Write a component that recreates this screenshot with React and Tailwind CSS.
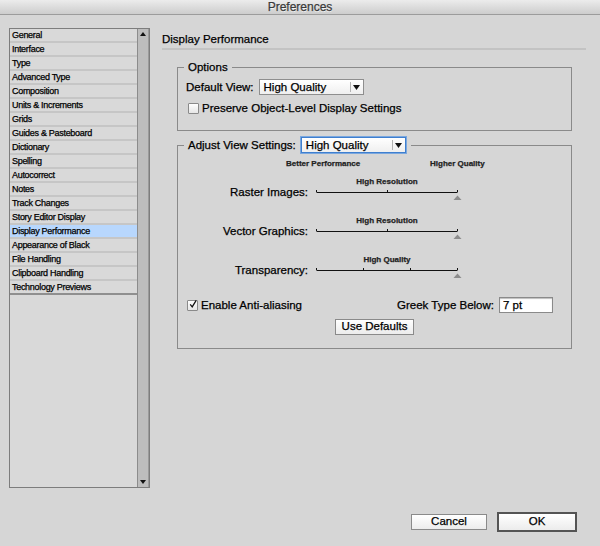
import React from 'react';

const ITEMS = [
    'General', 'Interface', 'Type', 'Advanced Type', 'Composition', 'Units & Increments',
    'Grids', 'Guides & Pasteboard', 'Dictionary', 'Spelling', 'Autocorrect', 'Notes',
    'Track Changes', 'Story Editor Display', 'Display Performance', 'Appearance of Black',
    'File Handling', 'Clipboard Handling', 'Technology Previews',
];

const Dropdown = ({ value, focused }) => (
    <div className={`flex h-[16px] w-[105px] items-stretch bg-gradient-to-b from-white to-[#efefef] ${focused ? 'border border-[#3f7fcf] shadow-[0_0_0_1px_#7aa7de]' : 'border border-[#8e8e8e]'}`}>
        <span className="flex-1 pl-[4px] text-[11.5px] leading-[14px] text-black">{value}</span>
        <span className="my-[2px] w-px bg-[#b4b4b4]"></span>
        <span className="flex w-[12px] items-center justify-center">
            <svg width="7" height="5" viewBox="0 0 7 5"><path d="M0 0h7L3.5 5z" fill="#111" /></svg>
        </span>
    </div>
);

const Checkbox = ({ checked }) => (
    <span className="flex h-[11px] w-[11px] items-center justify-center rounded-[1px] border border-[#8a8a8a] bg-gradient-to-b from-white to-[#e6e6e6]">
        {checked && (
            <svg width="10" height="10" viewBox="0 0 10 10" className="-mt-[2px] ml-[1px]">
                <path d="M1.5 5.5 L4 8.5 L9 0.5" stroke="#111" strokeWidth="1.6" fill="none" />
            </svg>
        )}
    </span>
);

const Slider = ({ caption, ticks }) => (
    <div className="w-[142px]">
        <div className="h-[10px] text-center text-[8px] font-bold leading-[10px] text-[#222]">{caption}</div>
        <svg width="150" height="14" className="overflow-visible">
            <line x1="0.5" y1="5.5" x2="141.5" y2="5.5" stroke="#111" strokeWidth="1.2" />
            {ticks.map(t => (
                <line key={t} x1={t + 0.5} y1="3" x2={t + 0.5} y2="5" stroke="#111" strokeWidth="1" />
            ))}
            <path d="M137.5 13 L141.5 8.5 L145.5 13 Z" fill="#8c8c8c" />
        </svg>
    </div>
);

const Button = ({ children, width, primary }) => (
    <button className={`flex items-center justify-center bg-gradient-to-b from-white to-[#ececec] text-[11.5px] text-black ${primary ? 'h-[20px] border-2 border-[#545454]' : 'h-[16px] border border-[#8a8a8a]'}`} style={{ width }}>
        {children}
    </button>
);

export default function App() {
    return (
        <div className="relative h-[546px] w-[600px] overflow-hidden bg-[#d6d6d6] font-['Liberation_Sans',Arial,sans-serif] text-black [-webkit-text-stroke:0.25px_currentColor]">
            {/* Title bar */}
            <div className="h-[15px] border-b border-[#9c9c9c] bg-gradient-to-b from-[#ececec] to-[#cdcdcd] text-center text-[12px] leading-[14px] text-[#3a3a3a] [text-shadow:0_1px_0_#f4f4f4]">
                Preferences
            </div>

            <div className="flex pt-[13px]">
                {/* Category list */}
                <div className="ml-[9px] flex h-[460px] w-[141px] border border-[#7d7d7d] bg-[#d9d9d9]">
                    <div className="flex-1">
                        {ITEMS.map((item, i) => (
                            <div
                                key={item}
                                className={`h-[14px] border-b-2 pl-[2px] text-[9px] leading-[12px] tracking-[-0.3px] text-black ${item === 'Display Performance' ? 'bg-[#b8d7fd]' : ''} ${i === ITEMS.length - 1 ? 'border-[#8f8f8f]' : 'border-[#c6c6c6]'}`}
                            >
                                {item}
                            </div>
                        ))}
                    </div>
                    <div className="flex w-[12px] flex-col items-center justify-between border-l border-r border-l-[#8c8c8c] border-r-[#9a9a9a] bg-[#bdbdbd] py-[3px]">
                        <svg width="6" height="4" viewBox="0 0 6 4"><path d="M3 0L6 4H0z" fill="#111" /></svg>
                        <svg width="6" height="4" viewBox="0 0 6 4"><path d="M0 0h6L3 4z" fill="#111" /></svg>
                    </div>
                </div>

                {/* Panel */}
                <div className="ml-[12px] w-[424px]">
                    <div className="border-b-2 border-[#c3c3c3] pb-[2px] pt-[4px] text-[11.5px] leading-[14px]">Display Performance</div>

                    <fieldset className="ml-[15px] mt-[10px] w-[395px] border border-[#8a8a8a] pb-[15px]">
                        <legend className="ml-[6px] px-[4px] text-[11.5px] leading-[14px]">Options</legend>
                        <div className="mt-[5px] flex items-center pl-[8px]">
                            <span className="mr-[5px] text-[11.5px] leading-[14px]">Default View:</span>
                            <Dropdown value="High Quality" />
                        </div>
                        <div className="mt-[6px] flex items-center gap-[3px] pl-[10px]">
                            <Checkbox />
                            <span className="text-[11.5px] leading-[14px]">Preserve Object-Level Display Settings</span>
                        </div>
                    </fieldset>

                    <fieldset className="ml-[15px] mt-[6px] w-[395px] border border-[#8a8a8a] pb-[13px]">
                        <legend className="ml-[6px] flex items-center px-[4px] pr-[5px]">
                            <span className="mr-[5px] text-[11.5px] leading-[14px]">Adjust View Settings:</span>
                            <Dropdown value="High Quality" focused />
                        </legend>

                        <div className="mt-[6px] flex pl-[108px] text-[8px] font-bold leading-[10px] text-[#222]">
                            <span className="w-[144px]">Better Performance</span>
                            <span>Higher Quality</span>
                        </div>

                        <div className="mt-[8px] grid grid-cols-[130px_auto] gap-x-[8px] gap-y-[15px]">
                            <span className="mt-[8px] text-right text-[11.5px] leading-[14px]">Raster Images:</span>
                            <Slider caption="High Resolution" ticks={[0, 71, 141]} />
                            <span className="mt-[8px] text-right text-[11.5px] leading-[14px]">Vector Graphics:</span>
                            <Slider caption="High Resolution" ticks={[0, 71, 141]} />
                            <span className="mt-[8px] text-right text-[11.5px] leading-[14px]">Transparency:</span>
                            <Slider caption="High Quality" ticks={[0, 47, 94, 141]} />
                        </div>

                        <div className="mt-[18px] flex items-center justify-between pl-[9px] pr-[18px]">
                            <div className="flex items-center gap-[3px]">
                                <Checkbox checked />
                                <span className="text-[11.5px] leading-[14px]">Enable Anti-aliasing</span>
                            </div>
                            <div className="flex items-center">
                                <span className="mr-[5px] text-[11.5px] leading-[14px]">Greek Type Below:</span>
                                <div className="h-[16px] w-[54px] border border-[#8a8a8a] bg-white pl-[3px] text-[11.5px] leading-[14px] shadow-[inset_0_1px_1px_#bdbdbd]">7 pt</div>
                            </div>
                        </div>

                        <div className="mt-[6px] flex justify-center">
                            <Button width={79}>Use Defaults</Button>
                        </div>
                    </fieldset>
                </div>
            </div>

            {/* Footer buttons */}
            <div className="mt-[24px] flex items-center justify-end gap-[10px] pr-[23px]">
                <Button width={76}>Cancel</Button>
                <Button width={80} primary>OK</Button>
            </div>
        </div>
    );
}
